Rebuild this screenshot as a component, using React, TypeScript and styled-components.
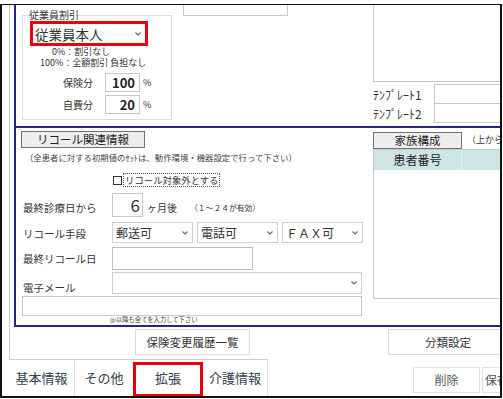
import styled, { createGlobalStyle } from "styled-components";

const NAVY = "#25258a";
const LINE = "#cdcdcd";
const RED = "#e8000d";

const GlobalStyle = createGlobalStyle`
  html, body { margin: 0; padding: 0; background: #fff; }
  body {
    font-family: "Noto Sans CJK JP", "Noto Sans", sans-serif;
    color: #333;
  }
`;

function Chevron() {
  return (
    <svg width="6" height="4" viewBox="0 0 6 4">
      <polyline points="0.5,0.5 3,3 5.5,0.5" fill="none" stroke="#666" strokeWidth="1.1" />
    </svg>
  );
}

export default function App() {
  return (
    <>
      <GlobalStyle />
      <Frame>
        <Panel>
          <NavyBox>
            <Upper>
              <DiscountGroup>
                <Legend>従業員割引</Legend>
                <Select $w={118} $h={25} $size={13.5} $highlight>
                  <span>従業員本人</span>
                  <Chevron />
                </Select>
                <NoteBlock>
                  <NoteLine $indent={22}>0%：割引なし</NoteLine>
                  <NoteLine $indent={10}>100%：全額割引 負担なし</NoteLine>
                </NoteBlock>
                <RateRow $top={5}>
                  <RateLabel>保険分</RateLabel>
                  <RateInput>100</RateInput>
                  <Percent>%</Percent>
                </RateRow>
                <RateRow $top={3}>
                  <RateLabel>自費分</RateLabel>
                  <RateInput>20</RateInput>
                  <Percent>%</Percent>
                </RateRow>
              </DiscountGroup>
              <PeekBox />
              <MemoColumn>
                <MemoBox />
                <TemplateRow $top={2}>
                  <TemplateLabel>ﾃﾝﾌﾟﾚｰﾄ1</TemplateLabel>
                  <TemplateInput />
                </TemplateRow>
                <TemplateRow $top={-1}>
                  <TemplateLabel>ﾃﾝﾌﾟﾚｰﾄ2</TemplateLabel>
                  <TemplateInput />
                </TemplateRow>
              </MemoColumn>
            </Upper>

            <Lower>
              <RecallForm>
                <SectionTitle $w={124}>リコール関連情報</SectionTitle>
                <Hint>（全患者に対する初期値のｾｯﾄは、動作環境・機器設定で行って下さい）</Hint>
                <CheckRow>
                  <CheckBox />
                  <CheckText>リコール対象外とする</CheckText>
                </CheckRow>
                <FieldRow $top={6} $h={24}>
                  <FieldLabel $pt={5}>最終診療日から</FieldLabel>
                  <MonthInput>6</MonthInput>
                  <Unit>ヶ月後</Unit>
                  <Range>（１～２４が有効）</Range>
                </FieldRow>
                <FieldRow $top={5} $h={21}>
                  <FieldLabel $pt={3}>リコール手段</FieldLabel>
                  <SelectGroup>
                    <Select $w={81} $h={21} $size={12}>
                      <span>郵送可</span>
                      <Chevron />
                    </Select>
                    <Select $w={81} $h={21} $size={12}>
                      <span>電話可</span>
                      <Chevron />
                    </Select>
                    <Select $w={81} $h={21} $size={12}>
                      <span>ＦＡＸ可</span>
                      <Chevron />
                    </Select>
                  </SelectGroup>
                </FieldRow>
                <FieldRow $top={4} $h={23}>
                  <FieldLabel $pt={1}>最終リコール日</FieldLabel>
                  <TextBox $w={141} $h={23} />
                </FieldRow>
                <FieldRow $top={2} $h={22}>
                  <FieldLabel $pt={9}>電子メール</FieldLabel>
                  <Select $w={250} $h={22} $size={12}>
                    <span />
                    <Chevron />
                  </Select>
                </FieldRow>
                <WideInput />
                <TinyNote>@以降も全てを入力して下さい</TinyNote>
              </RecallForm>

              <Family>
                <FamilyHead>
                  <SectionTitle $w={89}>家族構成</SectionTitle>
                  <FamilyHint>（上から順</FamilyHint>
                </FamilyHead>
                <Table>
                  <HeaderRow>
                    <HeaderCell $w={88}>患者番号</HeaderCell>
                    <HeaderCell $w={100} />
                  </HeaderRow>
                </Table>
              </Family>
            </Lower>
          </NavyBox>

          <ButtonRow>
            <PlainButton $w={115} $left={125}>保険変更履歴一覧</PlainButton>
            <PlainButton $w={120} $left={138}>分類設定</PlainButton>
          </ButtonRow>
        </Panel>

        <BottomBar>
          <TabStrip>
            <Tab $w={66}>基本情報</Tab>
            <Tab $w={59}>その他</Tab>
            <Tab $w={69} $marked>拡張</Tab>
            <Tab $w={65}>介護情報</Tab>
          </TabStrip>
          <ActionButton $w={67} $left={145}>削除</ActionButton>
          <ActionButton $w={28} $left={2} $start>保存</ActionButton>
        </BottomBar>
      </Frame>
    </>
  );
}

const Frame = styled.div`
  box-sizing: border-box;
  width: 502px;
  height: 394px;
  margin-top: 4px;
  border: 2px solid #111;
  border-top-width: 1px;
  overflow: hidden;
  display: flex;
  flex-direction: column;
`;

const Panel = styled.div`
  flex-shrink: 0;
  margin-left: 7px;
  height: 354px;
  border-left: 1px solid ${LINE};
  display: flex;
  flex-direction: column;
`;

const NavyBox = styled.div`
  box-sizing: border-box;
  margin-left: 4px;
  height: 322px;
  border-left: 2px solid ${NAVY};
  border-bottom: 2px solid ${NAVY};
  display: flex;
  flex-direction: column;
`;

const Upper = styled.section`
  box-sizing: border-box;
  height: 123px;
  border-bottom: 2px solid ${NAVY};
  display: flex;
  align-items: flex-start;
`;

const DiscountGroup = styled.div`
  position: relative;
  flex-shrink: 0;
  box-sizing: border-box;
  width: 150px;
  height: 105px;
  margin: 10px 0 0 6px;
  padding: 5px 0 0 7px;
  border: 1px solid #dcdcdc;
`;

const Legend = styled.span`
  position: absolute;
  left: 6px;
  top: -7px;
  font-size: 10px;
  line-height: 12px;
  color: #333;
`;

const Select = styled.div<{ $w: number; $h: number; $size: number; $highlight?: boolean }>`
  flex-shrink: 0;
  box-sizing: border-box;
  width: ${(p) => p.$w}px;
  height: ${(p) => p.$h}px;
  display: flex;
  align-items: center;
  justify-content: space-between;
  padding: ${(p) => (p.$highlight ? "0 4px 0 2px" : "0 4px 0 3px")};
  border: ${(p) => (p.$highlight ? `3px solid ${RED}` : "1px solid #cfcfcf")};
  background: #fff;
  font-size: ${(p) => p.$size}px;
  color: #333;
  white-space: nowrap;
`;

const NoteBlock = styled.div`
  font-size: 9px;
  line-height: 11px;
  color: #333;
`;

const NoteLine = styled.div<{ $indent: number }>`
  padding-left: ${(p) => p.$indent}px;
  white-space: nowrap;
`;

const RateRow = styled.div<{ $top: number }>`
  display: flex;
  align-items: center;
  margin-top: ${(p) => p.$top}px;
`;

const RateLabel = styled.span`
  width: 63px;
  text-align: right;
  font-size: 10px;
`;

const RateInput = styled.div`
  box-sizing: border-box;
  width: 35px;
  height: 19px;
  margin-left: 12px;
  padding-right: 4px;
  border: 1px solid #c8c8c8;
  font-size: 13px;
  font-weight: 700;
  line-height: 17px;
  text-align: right;
  color: #222;
`;

const Percent = styled.span`
  margin-left: 3px;
  font-size: 9px;
`;

const PeekBox = styled.div`
  flex-shrink: 0;
  box-sizing: border-box;
  width: 105px;
  height: 11px;
  margin-left: 11px;
  border: 1px solid #c8c8c8;
  border-top: none;
`;

const MemoColumn = styled.div`
  flex-shrink: 0;
  width: 140px;
  margin-left: 85px;
  display: flex;
  flex-direction: column;
`;

const MemoBox = styled.div`
  box-sizing: border-box;
  height: 77px;
  border-left: 1px solid #c8c8c8;
  border-bottom: 1px solid #c8c8c8;
`;

const TemplateRow = styled.div<{ $top: number }>`
  display: flex;
  align-items: center;
  height: 20px;
  margin-top: ${(p) => p.$top}px;
`;

const TemplateLabel = styled.span`
  width: 61px;
  font-size: 12px;
  white-space: nowrap;
`;

const TemplateInput = styled.div`
  flex: 1;
  box-sizing: border-box;
  height: 20px;
  border: 1px solid #c8c8c8;
`;

const Lower = styled.section`
  height: 197px;
  display: flex;
  align-items: flex-start;
`;

const RecallForm = styled.div`
  flex-shrink: 0;
  box-sizing: border-box;
  width: 357px;
  padding-left: 5px;
  display: flex;
  flex-direction: column;
`;

const SectionTitle = styled.div<{ $w: number }>`
  flex-shrink: 0;
  box-sizing: border-box;
  width: ${(p) => p.$w}px;
  height: 17px;
  margin-top: 3px;
  border: 1px solid #707070;
  background: #eeeeee;
  font-size: 11.5px;
  line-height: 15px;
  text-align: center;
  color: #222;
`;

const Hint = styled.div`
  margin-top: 3px;
  padding-left: 4px;
  font-size: 8.4px;
  line-height: 12px;
  white-space: nowrap;
  color: #444;
`;

const CheckRow = styled.div`
  display: flex;
  align-items: center;
  height: 14px;
  margin-top: 10px;
  padding-left: 92px;
`;

const CheckBox = styled.span`
  box-sizing: border-box;
  width: 9px;
  height: 9px;
  border: 1px solid #333;
  background: #fff;
`;

const CheckText = styled.span`
  margin-left: 1px;
  padding: 0 1px;
  border: 1px dotted #555;
  font-size: 9.4px;
  line-height: 12px;
  white-space: nowrap;
`;

const FieldRow = styled.div<{ $top: number; $h: number }>`
  display: flex;
  align-items: center;
  height: ${(p) => p.$h}px;
  margin-top: ${(p) => p.$top}px;
`;

const FieldLabel = styled.span<{ $pt: number }>`
  flex-shrink: 0;
  width: 91px;
  padding-top: ${(p) => p.$pt}px;
  padding-left: 2px;
  box-sizing: border-box;
  font-size: 10.5px;
  line-height: 12px;
  white-space: nowrap;
`;

const MonthInput = styled.div`
  box-sizing: border-box;
  width: 31px;
  height: 24px;
  padding-right: 2px;
  border: 1px solid #c8c8c8;
  font-size: 17px;
  line-height: 22px;
  text-align: right;
`;

const Unit = styled.span`
  margin: 4px 0 0 4px;
  font-size: 10px;
`;

const Range = styled.span`
  margin: 4px 0 0 13px;
  font-size: 7.8px;
  white-space: nowrap;
`;

const SelectGroup = styled.div`
  display: flex;
  gap: 4px;
`;

const TextBox = styled.div<{ $w: number; $h: number }>`
  box-sizing: border-box;
  width: ${(p) => p.$w}px;
  height: ${(p) => p.$h}px;
  border: 1px solid #bdbdbd;
`;

const WideInput = styled.div`
  box-sizing: border-box;
  width: 340px;
  height: 20px;
  margin: 2px 0 0 1px;
  border: 1px solid #c8c8c8;
`;

const TinyNote = styled.div`
  padding-left: 89px;
  font-size: 6.3px;
  line-height: 8px;
  white-space: nowrap;
  color: #444;
`;

const Family = styled.div`
  flex-shrink: 0;
  width: 200px;
  margin-top: 1px;
  display: flex;
  flex-direction: column;
`;

const FamilyHead = styled.div`
  display: flex;
  align-items: flex-end;
  height: 20px;
`;

const FamilyHint = styled.span`
  margin: 0 0 3px 5px;
  font-size: 9px;
  white-space: nowrap;
`;

const Table = styled.div`
  box-sizing: border-box;
  height: 150px;
  border: 1px solid #c8c8c8;
`;

const HeaderRow = styled.div`
  display: flex;
  height: 20px;
  background: #cde5e5;
`;

const HeaderCell = styled.div<{ $w: number }>`
  flex-shrink: 0;
  box-sizing: border-box;
  width: ${(p) => p.$w}px;
  border-right: 1px solid #e6f2f2;
  font-size: 12px;
  line-height: 20px;
  text-align: center;
  color: #222;
`;

const ButtonRow = styled.div`
  height: 32px;
  display: flex;
  align-items: flex-start;
  padding-top: 2px;
  box-sizing: border-box;
`;

const PlainButton = styled.div<{ $w: number; $left: number }>`
  flex-shrink: 0;
  box-sizing: border-box;
  width: ${(p) => p.$w}px;
  height: 26px;
  margin-left: ${(p) => p.$left}px;
  border: 1px solid #dadada;
  background: #fff;
  font-size: 11.5px;
  line-height: 24px;
  text-align: center;
  color: #333;
`;

const BottomBar = styled.div`
  flex: 1;
  display: flex;
  align-items: flex-start;
`;

const TabStrip = styled.div`
  flex-shrink: 0;
  display: flex;
  width: 259px;
  height: 37px;
  margin-left: 7px;
  box-sizing: border-box;
  border-top: 1px solid ${LINE};
`;

const Tab = styled.div<{ $w: number; $marked?: boolean }>`
  position: relative;
  flex-shrink: 0;
  box-sizing: border-box;
  width: ${(p) => p.$w}px;
  padding-top: 9px;
  border-right: 1px solid #e2e2e2;
  font-size: 13px;
  line-height: 18px;
  text-align: center;
  color: #34404c;

  &::after {
    content: "";
    display: ${(p) => (p.$marked ? "block" : "none")};
    position: absolute;
    left: -1px;
    right: -1px;
    top: 2px;
    bottom: -1px;
    border: 3px solid ${RED};
  }
`;

const ActionButton = styled.div<{ $w: number; $left: number; $start?: boolean }>`
  flex-shrink: 0;
  box-sizing: border-box;
  width: ${(p) => p.$w}px;
  height: 26px;
  margin: 8px 0 0 ${(p) => p.$left}px;
  padding-left: ${(p) => (p.$start ? "2px" : "0")};
  border: 1px solid #e2e2e2;
  font-size: 12px;
  line-height: 24px;
  text-align: ${(p) => (p.$start ? "left" : "center")};
  white-space: nowrap;
  overflow: hidden;
  color: #555;
`;
